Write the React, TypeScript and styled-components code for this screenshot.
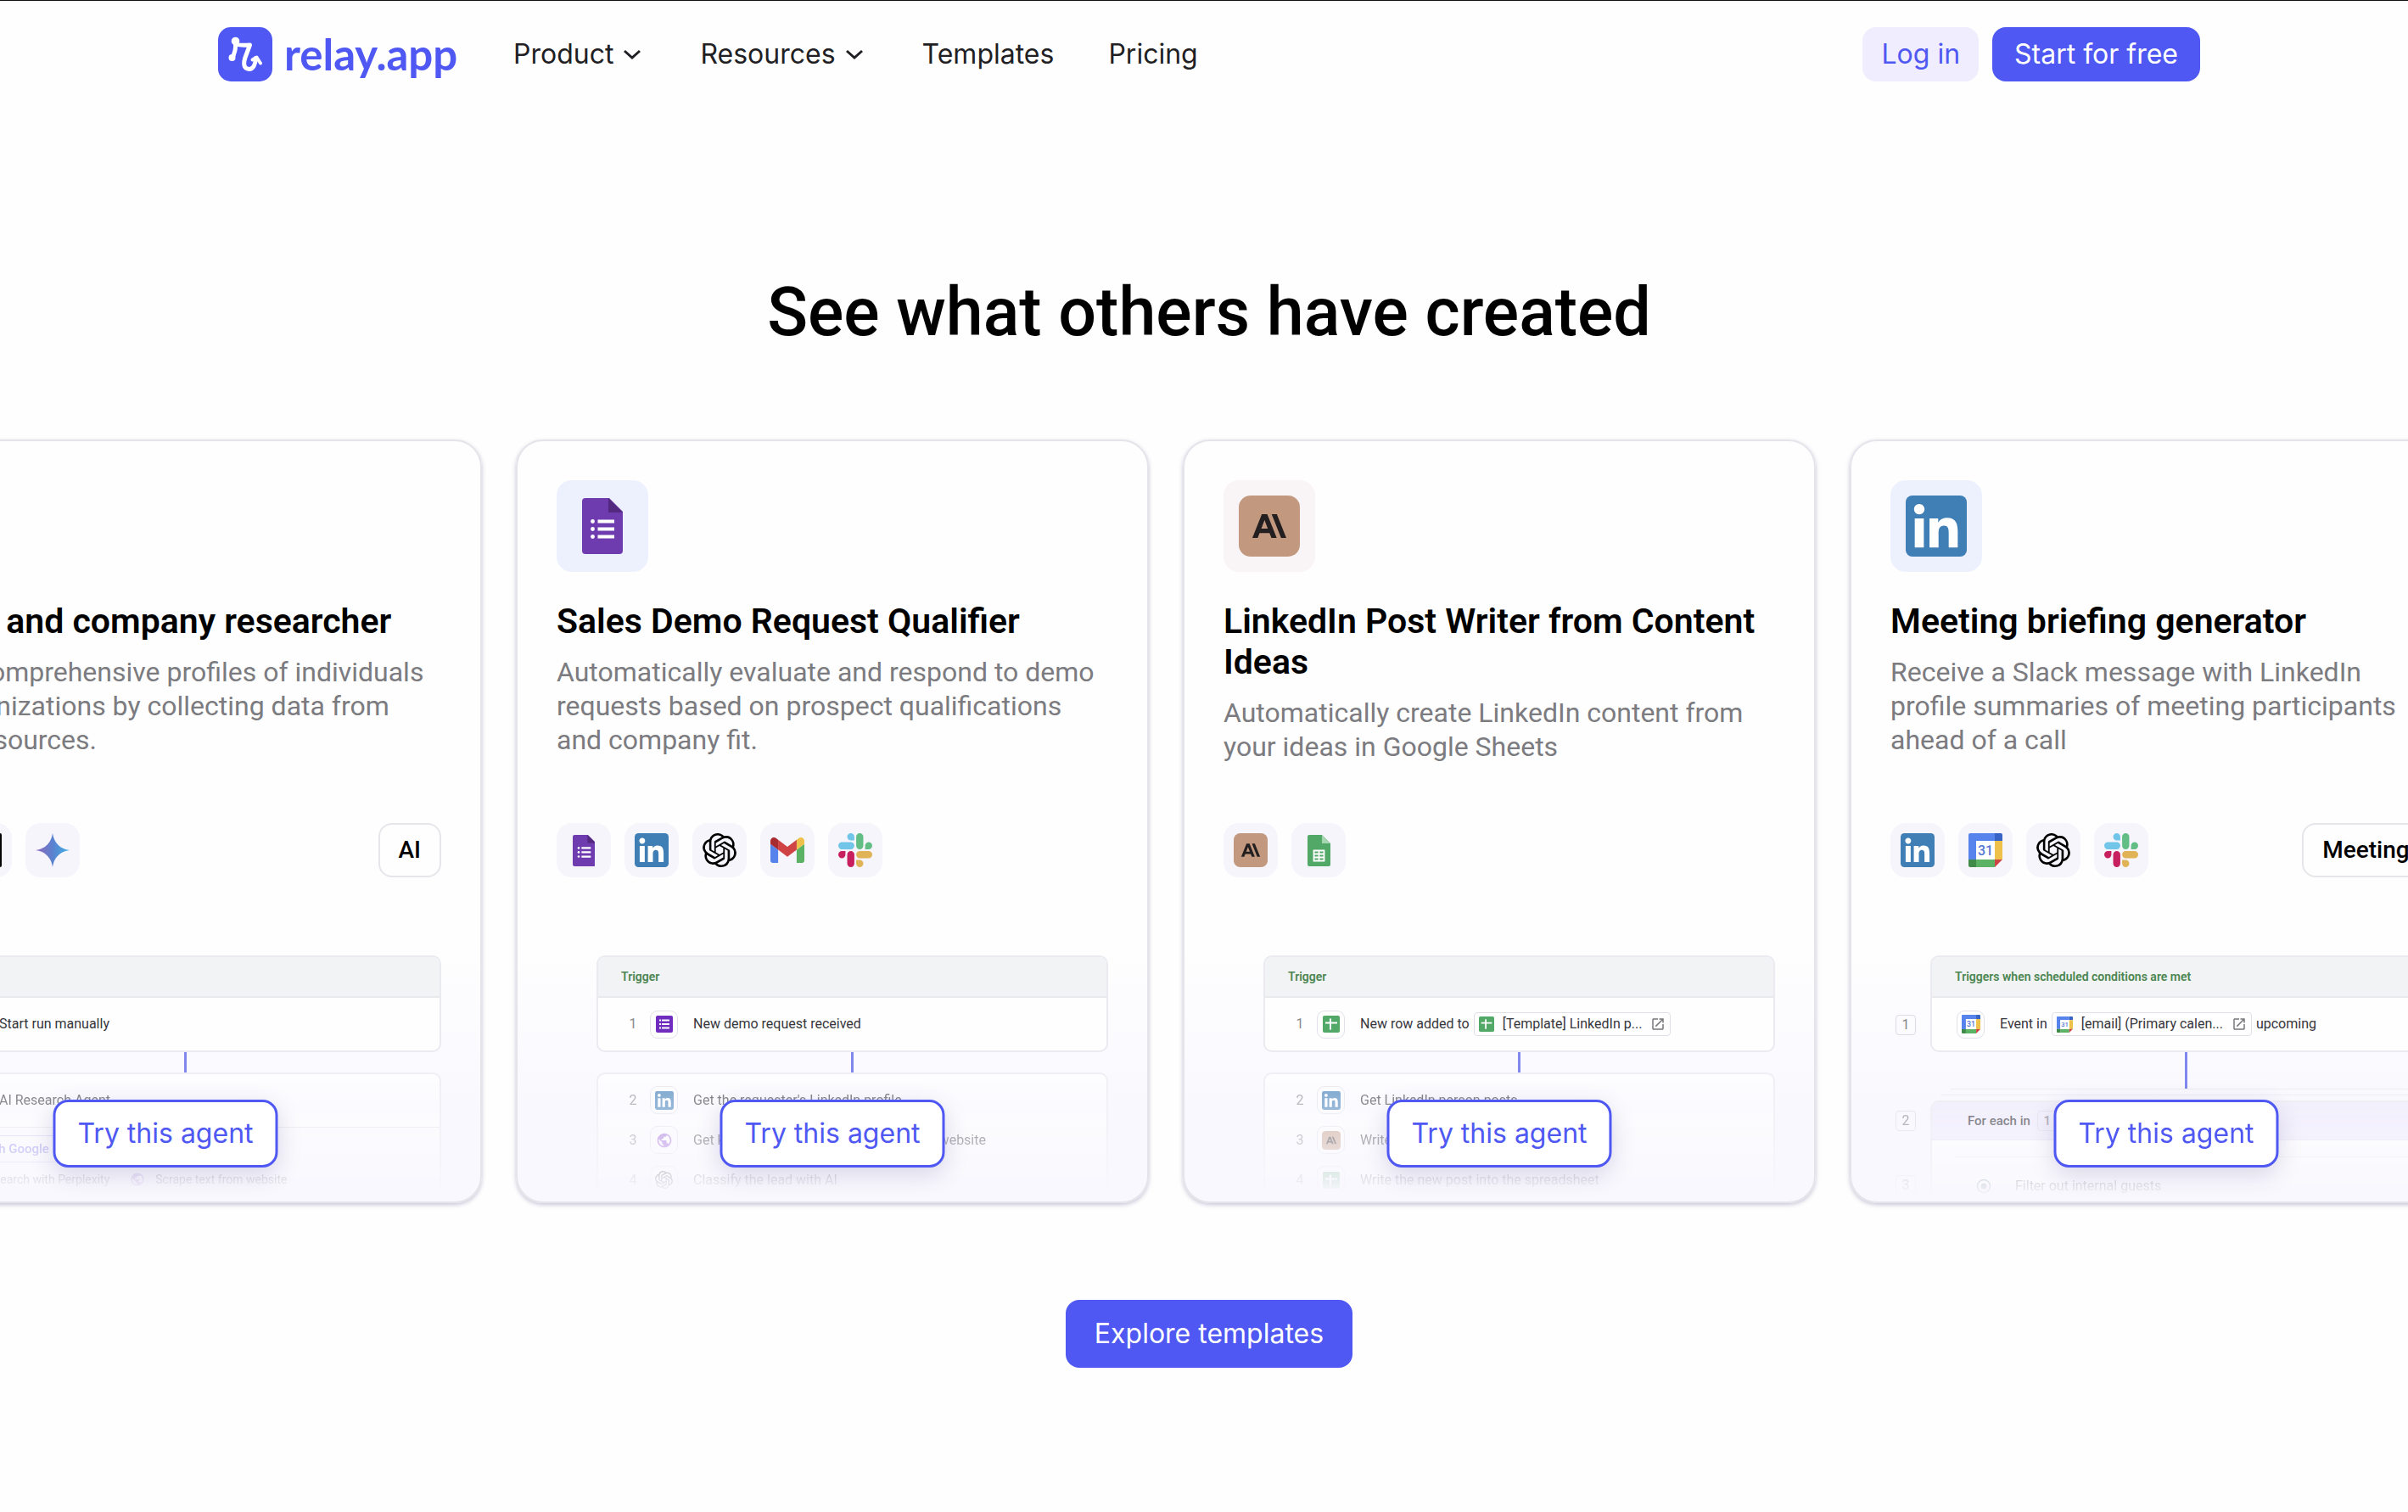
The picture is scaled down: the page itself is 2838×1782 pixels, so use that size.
import React from "react";
import styled, { createGlobalStyle, css } from "styled-components";

const GlobalStyle = createGlobalStyle`
  *, *::before, *::after { box-sizing: border-box; }
  body { margin: 0; background: #fefefe; }
  h1, h2, h3, p, ul, ol { margin: 0; padding: 0; }
  ul, ol { list-style: none; }
  svg { display: block; flex: none; }
  button { font: inherit; cursor: pointer; border: 0; background: none; padding: 0; color: inherit; }
  a { color: inherit; text-decoration: none; }
`;

const display = `Inter, "Liberation Sans", sans-serif`;
const text = `Roboto, "Liberation Sans", sans-serif`;
const brand = "#4f58f2";

/* ---------- page ---------- */

const Page = styled.div`
  min-height: 100vh;
  overflow: hidden;
  border-top: 1px solid #111;
  padding-left: 12px;
  background: #fefefe;
  font-family: ${text};
`;

const Header = styled.header`
  display: flex;
  align-items: center;
  max-width: 2336px;
  margin: 0 auto;
  padding: 31px 0 32px;
  font-family: ${display};
  font-size: 32px;
  line-height: 40px;
`;

const Brand = styled.a`
  display: flex;
  align-items: center;
  gap: 14px;
  width: 348px;
  color: ${brand};
  font: 700 51px/64px Lato, sans-serif;
`;

const Nav = styled.nav`
  display: flex;
  align-items: center;
  gap: 64px;
  flex: 1;
  color: #1f1f24;
`;

const NavButton = styled.button`
  display: flex;
  align-items: center;
  gap: 6px;
`;

const HeaderActions = styled.div`
  display: flex;
  gap: 16px;
`;

const HeaderLink = styled.a<{ $primary?: boolean }>`
  padding: 12px ${(p) => (p.$primary ? 26 : 22)}px;
  border-radius: 16px;
  background: ${(p) => (p.$primary ? brand : "#efedfe")};
  color: ${(p) => (p.$primary ? "#fff" : brand)};
`;

const Heading = styled.h1`
  margin-top: 192px;
  text-align: center;
  font-size: 79px;
  line-height: 96px;
  font-weight: 500;
  color: #000;
`;

const Strip = styled.div`
  display: flex;
  gap: 40px;
  margin: 102px 0 114px -190px;
`;

const ExploreRow = styled.div`
  display: flex;
  justify-content: center;
  padding-bottom: 120px;
`;

const ExploreLink = styled.a`
  padding: 20px 34px;
  border-radius: 16px;
  background: ${brand};
  color: #fff;
  font: 400 32px/40px ${display};
`;

/* ---------- card ---------- */

const CardBox = styled.article`
  position: relative;
  flex: 0 0 746px;
  height: 900px;
  display: flex;
  flex-direction: column;
  padding: 46px 46px 0;
  border: 2px solid #e5e4ea;
  border-radius: 32px;
  background: linear-gradient(#fefefe 66%, #f9f8fe 88%);
  box-shadow: 0 2px 5px rgba(60, 50, 120, 0.28);
  overflow: hidden;

  > * {
    flex: none;
  }
`;

const HeroTile = styled.div<{ $bg: string }>`
  display: grid;
  place-items: center;
  width: 108px;
  height: 108px;
  border-radius: 18px;
  background: ${(p) => p.$bg};
`;

const Copy = styled.div`
  display: flex;
  flex-direction: column;
  gap: 16px;
  height: 262px;
  margin-top: 34px;
`;

const Title = styled.h2`
  font-size: 41px;
  line-height: 48px;
  font-weight: 600;
  color: #000;
`;

const Description = styled.p`
  font-size: 32px;
  line-height: 40px;
  color: #7b7b80;
`;

const Apps = styled.div`
  display: flex;
  justify-content: space-between;
`;

const AppList = styled.ul`
  display: flex;
  gap: 16px;
`;

const AppTile = styled.li`
  display: grid;
  place-items: center;
  width: 64px;
  height: 64px;
  border-radius: 18px;
  background: #f6f5fc;
`;

const Tag = styled.span`
  padding: 14px 22px;
  border: 2px solid #e7e5ea;
  border-radius: 16px;
  font-size: 28px;
  line-height: 32px;
  font-weight: 500;
  color: #000;
`;

const TryLink = styled.a`
  position: absolute;
  left: 50%;
  bottom: 40px;
  transform: translateX(-50%);
  padding: 17px 26px;
  border: 3px solid ${brand};
  border-radius: 18px;
  background: #fff;
  color: ${brand};
  font: 400 32px/40px ${display};
  white-space: nowrap;
  box-shadow: 0 8px 28px rgba(60, 50, 120, 0.18);
`;

/* ---------- workflow preview ---------- */

const Preview = styled.div`
  margin-top: 92px;
  font-size: 16px;
  line-height: 24px;
  color: #36363b;
`;

const Block = styled.div<{ $fade?: number }>`
  display: grid;
  grid-template-columns: 47px 1fr;
  ${(p) =>
    p.$fade &&
    css`
      height: ${p.$fade}px;
      overflow: hidden;
      mask-image: linear-gradient(rgba(0, 0, 0, 0.72), rgba(0, 0, 0, 0.3) 65%, transparent);
    `}
`;

const Gutter = styled.div<{ $top: number }>`
  display: flex;
  flex-direction: column;
  gap: 52px;
  padding: ${(p) => p.$top}px 0 0 6px;
`;

const Index = styled.span`
  width: 24px;
  height: 24px;
  border: 1px solid #dddce4;
  border-radius: 4px;
  text-align: center;
  line-height: 22px;
  color: #85858a;
`;

const Panel = styled.div<{ $open?: boolean }>`
  border: 2px solid #ebeaf0;
  border-radius: ${(p) => (p.$open ? "10px 10px 0 0" : "10px")};
  border-bottom-width: ${(p) => (p.$open ? 0 : 2)}px;
  background: #fefeff;
  overflow: hidden;
`;

const PanelHead = styled.div`
  height: 48px;
  padding: 0 27px;
  border-bottom: 2px solid #e9e8ed;
  background: #f1f3f5;
  color: #4c8650;
  font-size: 14px;
  line-height: 46px;
  font-weight: 600;
`;

const Step = styled.div<{ $tall?: boolean }>`
  display: flex;
  align-items: center;
  height: ${(p) => (p.$tall ? 62 : 47)}px;
  padding-left: 29px;
  white-space: nowrap;
`;

const StepNumber = styled.span`
  width: 24px;
  margin-right: 8px;
  text-align: center;
  color: #88888d;
`;

const StepIcon = styled.span`
  display: grid;
  place-items: center;
  width: 33px;
  height: 33px;
  margin-right: 18px;
  border: 1px solid #e2e1e8;
  border-radius: 9px;
`;

const StepLabel = styled.span`
  display: flex;
  align-items: center;
`;

const Steps = styled.div`
  padding-top: 7px;
`;

const Pill = styled.span`
  display: flex;
  align-items: center;
  gap: 10px;
  height: 28px;
  margin: 0 5px;
  padding: 0 5px;
  border: 1px solid #e0dfe6;
  border-radius: 4px;
`;

const Connector = styled.div<{ $h: number }>`
  width: 3px;
  height: ${(p) => p.$h}px;
  margin-left: 347px;
  background: #8087ee;
`;

const LoopEdge = styled.div<{ $inset: number }>`
  height: 7px;
  margin: 0 ${(p) => p.$inset}px 0 ${(p) => p.$inset + 47}px;
  border-top: 1px solid #eeedf5;
`;

const LoopHead = styled.div`
  display: flex;
  align-items: center;
  gap: 8px;
  height: 45px;
  padding-left: 42px;
  border-bottom: 1px solid #e3e0f3;
  background: #efecfb;
  font-size: 15px;
  font-weight: 500;
`;

const LoopBody = styled.div`
  display: flex;
  align-items: center;
  gap: 28px;
  height: 60px;
  margin: 19px 0 0 26px;
  padding: 8px 0 0 26px;
  border-top: 1px solid #e8e7ef;
`;

const ToolRow = styled.div`
  display: flex;
  align-items: center;
  gap: 12px;
  padding-left: 28px;
  font-size: 14px;
  line-height: 20px;
  white-space: nowrap;
`;

const ToolArea = styled.div`
  display: flex;
  flex-direction: column;
  gap: 10px;
  padding-top: 9px;
  border-top: 1px solid #e3e2ea;
`;

const ToolChip = styled.span`
  padding: 5px 12px;
  border: 1px solid #cbc6f5;
  border-radius: 6px;
  color: #7d77ea;
  font-weight: 500;
  font-size: 15px;
`;

const ToolName = styled.span`
  margin-right: 12px;
`;

/* ---------- icons ---------- */

type IconProps = { size?: number };

const RelayMark = () => (
  <svg width="64" height="64" viewBox="0 0 64 64" fill="none">
    <rect width="64" height="64" rx="15" fill={brand} />
    <g stroke="#fff" strokeWidth="5" strokeLinecap="round" strokeLinejoin="round">
      <path d="M17 36.500c1-4 3.500-7 3.500-13V20c6 2 11 1.500 17 1l-4.500 12c-4 10-3 16 3.500 16.500 5 .2 7.500-6 8-13" />
      <path d="M40.500 38.500l5-3 4.500 7" strokeWidth="4" />
    </g>
    <circle cx="20.500" cy="16.500" r="4.800" fill="#fff" />
    <circle cx="16.500" cy="36" r="4" fill="#fff" />
  </svg>
);

const Chevron = () => (
  <svg width="32" height="32" viewBox="0 0 32 32" fill="none" stroke="#1f1f24" strokeWidth="3">
    <path d="M7 12l9 8 9-8" />
  </svg>
);

const LinkedIn = ({ size = 40 }: IconProps) => (
  <svg width={size} height={size} viewBox="0 0 24 24">
    <rect width="24" height="24" rx="2.600" fill="#3f7fb6" />
    <path
      fill="#fff"
      d="M20.447 20.452h-3.554v-5.569c0-1.328-.027-3.037-1.852-3.037-1.853 0-2.136 1.445-2.136 2.939v5.667H9.351V9h3.414v1.561h.046c.477-.9 1.637-1.850 3.370-1.850 3.601 0 4.267 2.370 4.267 5.455v6.286zM5.337 7.433c-1.144 0-2.063-.926-2.063-2.065 0-1.138.920-2.063 2.063-2.063 1.140 0 2.064.925 2.064 2.063 0 1.139-.925 2.065-2.064 2.065zm1.782 13.019H3.555V9h3.564v11.452z"
    />
  </svg>
);

const OpenAI = ({ size = 40 }: IconProps) => (
  <svg width={size} height={size} viewBox="0 0 24 24">
    <path d="M22.2819 9.8211a5.9847 5.9847 0 0 0-.5157-4.9108 6.0462 6.0462 0 0 0-6.5098-2.9A6.0651 6.0651 0 0 0 4.9807 4.1818a5.9847 5.9847 0 0 0-3.9977 2.9 6.0462 6.0462 0 0 0 .7427 7.0966 5.98 5.98 0 0 0 .511 4.9107 6.051 6.051 0 0 0 6.5146 2.9001A5.9847 5.9847 0 0 0 13.2599 24a6.0557 6.0557 0 0 0 5.7718-4.2058 5.9894 5.9894 0 0 0 3.9977-2.9001 6.0557 6.0557 0 0 0-.7475-7.0729zm-9.022 12.6081a4.4755 4.4755 0 0 1-2.8764-1.0408l.1419-.0804 4.7783-2.7582a.7948.7948 0 0 0 .3927-.6813v-6.7369l2.02 1.1686a.071.071 0 0 1 .038.052v5.5826a4.504 4.504 0 0 1-4.4945 4.4944zm-9.6607-4.1254a4.4708 4.4708 0 0 1-.5346-3.0137l.142.0852 4.783 2.7582a.7712.7712 0 0 0 .7806 0l5.8428-3.3685v2.3324a.0804.0804 0 0 1-.0332.0615L9.74 19.9502a4.4992 4.4992 0 0 1-6.1408-1.6464zM2.3408 7.8956a4.485 4.485 0 0 1 2.3655-1.9728V11.6a.7664.7664 0 0 0 .3879.6765l5.8144 3.3543-2.0201 1.1685a.0757.0757 0 0 1-.071 0l-4.8303-2.7865A4.504 4.504 0 0 1 2.3408 7.872zm16.5963 3.8558L13.1038 8.364 15.1192 7.2a.0757.0757 0 0 1 .071 0l4.8303 2.7913a4.4944 4.4944 0 0 1-.6765 8.1042v-5.6772a.79.79 0 0 0-.407-.667zm2.0107-3.0231l-.142-.0852-4.7735-2.7818a.7759.7759 0 0 0-.7854 0L9.409 9.2297V6.8974a.0662.0662 0 0 1 .0284-.0615l4.8303-2.7866a4.4992 4.4992 0 0 1 6.6802 4.66zM8.3065 12.863l-2.02-1.1638a.0804.0804 0 0 1-.038-.0567V6.0742a4.4992 4.4992 0 0 1 7.3757-3.4537l-.142.0805L8.704 5.459a.7948.7948 0 0 0-.3927.6813zm1.0976-2.3654l2.602-1.4998 2.6069 1.4998v2.9994l-2.5974 1.4997-2.6067-1.4997Z" />
  </svg>
);

const Slack = () => (
  <svg width="40" height="40" viewBox="0 0 24 24">
    <path fill="#c8205f" d="M5.042 15.165a2.528 2.528 0 0 1-2.52 2.523A2.528 2.528 0 0 1 0 15.165a2.527 2.527 0 0 1 2.522-2.52h2.52v2.52zM6.313 15.165a2.527 2.527 0 0 1 2.521-2.52 2.527 2.527 0 0 1 2.521 2.52v6.313A2.528 2.528 0 0 1 8.834 24a2.528 2.528 0 0 1-2.521-2.522v-6.313z" />
    <path fill="#70c5e8" d="M8.834 5.042a2.528 2.528 0 0 1-2.521-2.52A2.528 2.528 0 0 1 8.834 0a2.528 2.528 0 0 1 2.521 2.522v2.52H8.834zM8.834 6.313a2.528 2.528 0 0 1 2.521 2.521 2.528 2.528 0 0 1-2.521 2.521H2.522A2.528 2.528 0 0 1 0 8.834a2.528 2.528 0 0 1 2.522-2.521h6.312z" />
    <path fill="#63be86" d="M18.956 8.834a2.528 2.528 0 0 1 2.522-2.521A2.528 2.528 0 0 1 24 8.834a2.528 2.528 0 0 1-2.522 2.521h-2.522V8.834zM17.688 8.834a2.528 2.528 0 0 1-2.523 2.521 2.527 2.527 0 0 1-2.52-2.521V2.522A2.527 2.527 0 0 1 15.165 0a2.528 2.528 0 0 1 2.523 2.522v6.312z" />
    <path fill="#e0b356" d="M15.165 18.956a2.528 2.528 0 0 1 2.523 2.522A2.528 2.528 0 0 1 15.165 24a2.527 2.527 0 0 1-2.52-2.522v-2.522h2.52zM15.165 17.688a2.527 2.527 0 0 1-2.52-2.523 2.526 2.526 0 0 1 2.52-2.52h6.313A2.527 2.527 0 0 1 24 15.165a2.528 2.528 0 0 1-2.522 2.523h-6.313z" />
  </svg>
);

const Gmail = () => (
  <svg width="40" height="30" viewBox="52 42 88 66">
    <path fill="#5683ec" d="M58 108h14V74L52 59v43c0 3.320 2.690 6 6 6" />
    <path fill="#5cb264" d="M120 108h14c3.320 0 6-2.690 6-6V59l-20 15" />
    <path fill="#edc14a" d="M120 48v26l20-15v-8c0-7.420-8.470-11.650-14.400-7.200" />
    <path fill="#cf4345" d="M72 74V48l24 18 24-18v26L96 92" />
    <path fill="#a92b32" d="M52 51v8l20 15V48l-5.600-4.200c-5.940-4.450-14.400-.220-14.400 7.200" />
  </svg>
);

const Calendar = ({ size = 40 }: IconProps) => (
  <svg width={size} height={size} viewBox="0 0 40 40">
    <path fill="#5683ec" d="M2 0h29v9H9v22H0V2a2 2 0 0 1 2-2z" />
    <path fill="#3763c6" d="M31 0h7a2 2 0 0 1 2 2v7h-9z" />
    <path fill="#edc14a" d="M31 9h9v22h-9z" />
    <path fill="#5cb264" d="M9 31h22v9H9z" />
    <path fill="#3f8a48" d="M0 31h9v9H2a2 2 0 0 1-2-2z" />
    <path fill="#cf4345" d="M31 31h9l-9 9z" />
    <path fill="#fff" d="M9 9h22v22H9z" />
    <text x="20" y="25.500" fontSize="16" fontWeight="500" textAnchor="middle" fill="#5577d4" fontFamily="Roboto, sans-serif">
      31
    </text>
  </svg>
);

const Anthropic = ({ size = 40 }: IconProps) => (
  <svg width={size} height={size} viewBox="0 0 72 72">
    <rect width="72" height="72" rx="14" fill="#c2997f" />
    <path
      transform="translate(16 16) scale(1.667)"
      fill="#231f20"
      d="M17.3041 3.541h-3.6718l6.696 16.918H24Zm-10.6082 0L0 20.459h3.7442l1.3693-3.5527h7.0052l1.3693 3.5528h3.7442L10.5363 3.5409Zm-.3712 10.2232 2.2914-5.9456 2.2914 5.9456Z"
    />
  </svg>
);

const Forms = ({ size = 66 }: IconProps) => (
  <svg width={(size * 48) / 66} height={size} viewBox="0 0 48 66">
    <path fill="#6f3cb0" d="M4 0h28l16 16v46a4 4 0 0 1-4 4H4a4 4 0 0 1-4-4V4a4 4 0 0 1 4-4z" />
    <path fill="#52297f" d="M31 0l17 17H31z" />
    <g fill="#fff">
      <circle cx="12.500" cy="27.500" r="2.400" />
      <circle cx="12.500" cy="36.500" r="2.400" />
      <circle cx="12.500" cy="45.500" r="2.400" />
      <path d="M18.500 25.500H38v4H18.500zM18.500 34.500H38v4H18.500zM18.500 43.500H38v4H18.500z" />
    </g>
  </svg>
);

const Sheets = () => (
  <svg width="27" height="37" viewBox="0 0 27 37">
    <path fill="#52a866" d="M2 0h15l10 10v25a2 2 0 0 1-2 2H2a2 2 0 0 1-2-2V2a2 2 0 0 1 2-2z" />
    <path fill="#a5d6b0" d="M17 0l10 10H17z" />
    <path fill="none" stroke="#fff" strokeWidth="1.800" d="M7.500 18.500h12v12h-12zM7.500 22.500h12M7.500 26.500h12M13.500 18.500v12" />
  </svg>
);

const SheetsSmall = ({ size = 20 }: IconProps) => (
  <svg width={size} height={size} viewBox="0 0 20 20">
    <rect width="20" height="20" rx="2" fill="#52a866" />
    <path stroke="#fff" strokeWidth="2" d="M3 8.500h14M9 3.500v13" />
  </svg>
);

const FormsSmall = () => (
  <svg width="20" height="20" viewBox="0 0 20 20">
    <rect width="20" height="20" rx="2" fill="#6f2cbf" />
    <path stroke="#fff" strokeWidth="2" d="M4 5.500h2M4 10h2M4 14.500h2M7 5.500h9M7 10h9M7 14.500h9" />
  </svg>
);

const Gemini = () => (
  <svg width="40" height="40" viewBox="0 0 40 40">
    <defs>
      <linearGradient id="gemini" x1="0" y1="0" x2="1" y2="0">
        <stop offset="0" stopColor="#9068bb" />
        <stop offset="0.500" stopColor="#5a82cf" />
        <stop offset="1" stopColor="#42b0e6" />
      </linearGradient>
    </defs>
    <path fill="url(#gemini)" d="M20 0c1.500 11 8.500 18.500 20 20-11.500 1.500-18.500 9-20 20-1.500-11-8.500-18.500-20-20C11.500 18.500 18.500 11 20 0z" />
  </svg>
);

const BlackApp = () => (
  <svg width="40" height="40" viewBox="0 0 40 40">
    <rect width="40" height="40" rx="2" fill="#050505" />
  </svg>
);

const Globe = ({ size = 24 }: IconProps) => (
  <svg width={size} height={size} viewBox="0 0 24 24" fill="#9a62d8">
    <path d="M12 2C6.480 2 2 6.480 2 12s4.480 10 10 10 10-4.480 10-10S17.520 2 12 2zm-1 17.930c-3.950-.490-7-3.850-7-7.930 0-.620.080-1.210.210-1.790L9 15v1c0 1.100.900 2 2 2v1.930zm6.900-2.540c-.260-.810-1-1.390-1.900-1.390h-1v-3c0-.550-.450-1-1-1H8v-2h2c.550 0 1-.450 1-1V7h2c1.100 0 2-.900 2-2v-.410c2.930 1.190 5 4.060 5 7.410 0 2.080-.800 3.970-2.100 5.390z" />
  </svg>
);

const OpenInNew = () => (
  <svg width="18" height="18" viewBox="0 0 24 24" fill="#77777c">
    <path d="M19 19H5V5h7V3H5c-1.110 0-2 .900-2 2v14c0 1.100.890 2 2 2h14c1.100 0 2-.900 2-2v-7h-2v7zM14 3v2h3.590l-9.830 9.830 1.410 1.410L19 6.410V10h2V3h-7z" />
  </svg>
);

const Target = () => (
  <svg width="18" height="18" viewBox="0 0 18 18">
    <circle cx="9" cy="9" r="7.500" fill="none" stroke="#4d6b7a" strokeWidth="1.500" />
    <circle cx="9" cy="9" r="3.500" fill="#4d6b7a" />
  </svg>
);

/* ---------- composition ---------- */

type NumberedStep = { icon: React.ReactNode; label: React.ReactNode };

const NumberedPreview = ({ trigger, steps }: { trigger: NumberedStep; steps: NumberedStep[] }) => (
  <Preview>
    <Block>
      <span />
      <Panel>
        <PanelHead>Trigger</PanelHead>
        <Step $tall>
          <StepNumber>1</StepNumber>
          <StepIcon>{trigger.icon}</StepIcon>
          <StepLabel>{trigger.label}</StepLabel>
        </Step>
      </Panel>
    </Block>
    <Connector $h={24} />
    <Block $fade={144}>
      <span />
      <Panel $open>
        <Steps>
          {steps.map((step, i) => (
            <Step key={i}>
              <StepNumber>{i + 2}</StepNumber>
              <StepIcon>{step.icon}</StepIcon>
              <StepLabel>{step.label}</StepLabel>
            </Step>
          ))}
        </Steps>
      </Panel>
    </Block>
  </Preview>
);

type CardProps = {
  hero?: React.ReactNode;
  heroBg?: string;
  title: string;
  description: string;
  apps: React.ReactNode[];
  tag?: string;
  children: React.ReactNode;
};

const Card = ({ hero, heroBg = "#edf1fd", title, description, apps, tag, children }: CardProps) => (
  <CardBox>
    <HeroTile $bg={heroBg}>{hero}</HeroTile>
    <Copy>
      <Title>{title}</Title>
      <Description>{description}</Description>
    </Copy>
    <Apps>
      <AppList>
        {apps.map((app, i) => (
          <AppTile key={i}>{app}</AppTile>
        ))}
      </AppList>
      {tag && <Tag>{tag}</Tag>}
    </Apps>
    {children}
    <TryLink href="#try">Try this agent</TryLink>
  </CardBox>
);

export default function App() {
  return (
    <Page>
      <GlobalStyle />
      <Header>
        <Brand href="#home">
          <RelayMark />
          relay.app
        </Brand>
        <Nav>
          <NavButton type="button">
            Product
            <Chevron />
          </NavButton>
          <NavButton type="button">
            Resources
            <Chevron />
          </NavButton>
          <a href="#templates">Templates</a>
          <a href="#pricing">Pricing</a>
        </Nav>
        <HeaderActions>
          <HeaderLink href="#login">Log in</HeaderLink>
          <HeaderLink href="#start" $primary>
            Start for free
          </HeaderLink>
        </HeaderActions>
      </Header>
      <main>
        <Heading>See what others have created</Heading>
        <Strip>
          <Card
            hero={<Gemini />}
            title="People and company researcher"
            description="Create comprehensive profiles of individuals and organizations by collecting data from multiple sources."
            apps={[<OpenAI />, <BlackApp />, <Gemini />]}
            tag="AI"
          >
            <Preview>
              <Block>
                <Gutter $top={70}>
                  <Index>1</Index>
                </Gutter>
                <Panel>
                  <PanelHead>Trigger</PanelHead>
                  <Step $tall>
                    <StepIcon />
                    <StepLabel>Start run manually</StepLabel>
                  </Step>
                </Panel>
              </Block>
              <Connector $h={24} />
              <Block $fade={144}>
                <Gutter $top={22}>
                  <Index>2</Index>
                </Gutter>
                <Panel $open>
                  <Step $tall>
                    <StepIcon />
                    <StepLabel>AI Research Agent</StepLabel>
                  </Step>
                  <ToolArea>
                    <ToolRow>
                      <ToolChip>Search Google</ToolChip>
                    </ToolRow>
                    <ToolRow>
                      <Globe size={18} />
                      <ToolName>Research with Perplexity</ToolName>
                      <Globe size={18} />
                      <ToolName>Scrape text from website</ToolName>
                    </ToolRow>
                  </ToolArea>
                </Panel>
              </Block>
            </Preview>
          </Card>

          <Card
            hero={<Forms />}
            title="Sales Demo Request Qualifier"
            description="Automatically evaluate and respond to demo requests based on prospect qualifications and company fit."
            apps={[<Forms size={37} />, <LinkedIn />, <OpenAI />, <Gmail />, <Slack />]}
          >
            <NumberedPreview
              trigger={{ icon: <FormsSmall />, label: "New demo request received" }}
              steps={[
                { icon: <LinkedIn size={22} />, label: "Get the requester's LinkedIn profile" },
                { icon: <Globe size={20} />, label: "Get key information from the requester's website" },
                { icon: <OpenAI size={21} />, label: "Classify the lead with AI" },
              ]}
            />
          </Card>

          <Card
            hero={<Anthropic size={72} />}
            heroBg="#f9f4f5"
            title="LinkedIn Post Writer from Content Ideas"
            description="Automatically create LinkedIn content from your ideas in Google Sheets"
            apps={[<Anthropic />, <Sheets />]}
          >
            <NumberedPreview
              trigger={{
                icon: <SheetsSmall />,
                label: (
                  <>
                    New row added to
                    <Pill>
                      <SheetsSmall size={18} />
                      [Template] LinkedIn p...
                      <OpenInNew />
                    </Pill>
                  </>
                ),
              }}
              steps={[
                { icon: <LinkedIn size={22} />, label: "Get LinkedIn person posts" },
                { icon: <Anthropic size={22} />, label: "Write a new LinkedIn post" },
                { icon: <SheetsSmall />, label: "Write the new post into the spreadsheet" },
              ]}
            />
          </Card>

          <Card
            hero={<LinkedIn size={72} />}
            title="Meeting briefing generator"
            description="Receive a Slack message with LinkedIn profile summaries of meeting participants ahead of a call"
            apps={[<LinkedIn />, <Calendar />, <OpenAI />, <Slack />]}
            tag="Meetings"
          >
            <Preview>
              <Block>
                <Gutter $top={70}>
                  <Index>1</Index>
                </Gutter>
                <Panel>
                  <PanelHead>Triggers when scheduled conditions are met</PanelHead>
                  <Step $tall>
                    <StepIcon>
                      <Calendar size={22} />
                    </StepIcon>
                    <StepLabel>
                      Event in
                      <Pill>
                        <Calendar size={19} />
                        [email] (Primary calen...
                        <OpenInNew />
                      </Pill>
                      upcoming
                    </StepLabel>
                  </Step>
                </Panel>
              </Block>
              <Connector $h={43} />
              <LoopEdge $inset={24} />
              <LoopEdge $inset={12} />
              <Block $fade={116}>
                <Gutter $top={12}>
                  <Index>2</Index>
                  <Index>3</Index>
                </Gutter>
                <Panel $open>
                  <LoopHead>
                    For each in <Index>1</Index>
                  </LoopHead>
                  <LoopBody>
                    <Target />
                    Filter out internal guests
                  </LoopBody>
                </Panel>
              </Block>
            </Preview>
          </Card>
        </Strip>
        <ExploreRow>
          <ExploreLink href="#explore">Explore templates</ExploreLink>
        </ExploreRow>
      </main>
    </Page>
  );
}
